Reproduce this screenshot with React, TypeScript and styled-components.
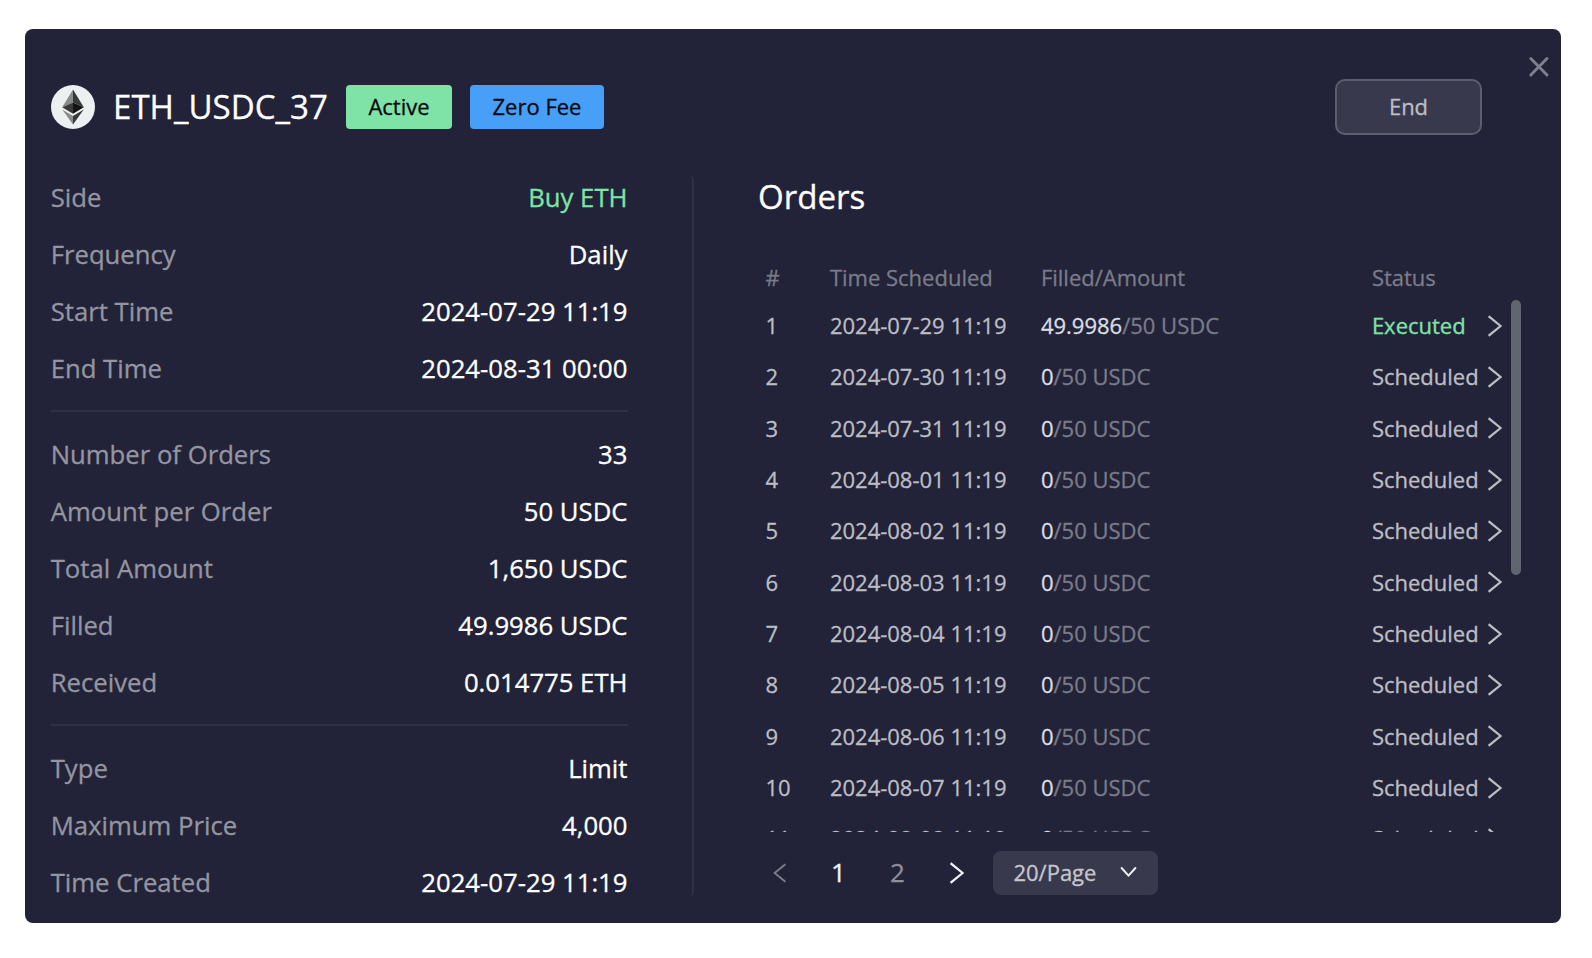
import React from "react";
import styled, { createGlobalStyle } from "styled-components";

const GlobalStyle = createGlobalStyle`
  *, *::before, *::after { box-sizing: border-box; }
  body {
    margin: 0;
    background: #fff;
    font-family: "Open Sans", "Noto Sans", sans-serif;
    -webkit-text-stroke: 0.3px currentColor;
  }
  button { font: inherit; cursor: pointer; }
`;

const Page = styled.div`
  width: 1592px;
  height: 958px;
  padding: 29px 31px 35px 25px;
  overflow: hidden;
`;

const Panel = styled.section`
  position: relative;
  width: 1536px;
  height: 894px;
  padding: 50px 40px 0 26px;
  border-radius: 8px;
  background: #222338;
  color: #fff;
`;

const CloseButton = styled.button`
  position: absolute;
  top: 26px;
  right: 10px;
  display: flex;
  padding: 0;
  border: 0;
  background: none;
  color: #7f808e;
`;

const Header = styled.header`
  display: flex;
  align-items: center;
  height: 56px;
  padding-right: 39px;
`;

const Title = styled.h1`
  width: 214px;
  margin: 0 19px 0 18px;
  font-size: 33.1px;
  line-height: 46px;
  font-weight: 400;
`;

const Badge = styled.span<{ $tone: string; $width: number }>`
  display: flex;
  align-items: center;
  justify-content: center;
  width: ${(p) => p.$width}px;
  height: 44px;
  margin-right: 18px;
  padding-bottom: 2px;
  border-radius: 4px;
  background: ${(p) => p.$tone};
  color: #06090d;
  font-size: 22px;
`;

const EndButton = styled.button`
  width: 147px;
  height: 56px;
  margin-left: auto;
  padding-bottom: 3px;
  border: 2px solid #5d5e70;
  border-radius: 10px;
  background: #39394e;
  color: #bdbdc4;
  font-size: 22px;
`;

const Body = styled.div`
  display: flex;
  padding-top: 33px;
`;

const Details = styled.div`
  width: 577px;
`;

const DetailGroup = styled.dl`
  margin: 0;

  & + & {
    margin-top: 14px;
    padding-top: 13px;
    border-top: 2px solid #2e3044;
  }
`;

const DetailRow = styled.div`
  display: flex;
  align-items: center;
  justify-content: space-between;
  height: 57px;
  padding: 2px 0.5px 0 0;
  font-size: 25.7px;
`;

const Label = styled.dt`
  margin-left: -0.3px;
  color: #9495a1;
`;

const Value = styled.dd<{ $accent?: boolean }>`
  margin: 0;
  color: ${(p) => (p.$accent ? "#7fe3a8" : "#fff")};
`;

const Separator = styled.div`
  width: 12px;
  height: 722px;
  margin: 7px 0 0 54px;
  border-right: 2px solid #2e3044;
  border-radius: 10px;
`;

const Orders = styled.div`
  display: flex;
  flex-direction: column;
  width: 763px;
  margin-left: 64px;
`;

const OrdersTitle = styled.h2`
  margin: 6px 0 0;
  font-size: 33.1px;
  line-height: 46px;
  font-weight: 400;
`;

const Row = styled.div`
  display: grid;
  grid-template-columns: 64.5px 211px 331px 116.5px 14px;
  align-items: center;
  height: 51.35px;
  padding: 0 0 1.6px 7.4px;
  color: #bdbdc4;
  font-size: 22px;

  svg {
    margin-top: 1.6px;
  }
`;

const HeadRow = styled(Row)`
  height: 46px;
  margin-top: 34px;
  padding-bottom: 0;
  color: #7a7b89;
`;

const ListArea = styled.div`
  display: flex;
  height: 532px;
  overflow: hidden;
`;

const List = styled.div`
  flex: none;
  width: 745px;
`;

const Scrollbar = styled.div`
  width: 10px;
  height: 275px;
  margin-left: 8px;
  border-radius: 5px;
  background: #5f6571;
`;

const Filled = styled.span`
  color: #dcdde3;
`;

const Muted = styled.span`
  color: #7a7b89;
`;

const Status = styled.span<{ $done: boolean }>`
  color: ${(p) => (p.$done ? "#7fe3a8" : "inherit")};
`;

const Pagination = styled.nav`
  display: flex;
  align-items: center;
  height: 45px;
  margin-top: 18px;
`;

const PageLink = styled.span<{ $current?: boolean; $gap: number }>`
  margin-left: ${(p) => p.$gap}px;
  padding-bottom: 1px;
  color: ${(p) => (p.$current ? "#eef2fb" : "#8d8e9a")};
  font-size: 26px;
`;

const ArrowSlot = styled.span<{ $gap: number; $current?: boolean }>`
  display: flex;
  margin-left: ${(p) => p.$gap}px;
  color: ${(p) => (p.$current ? "#eef2fb" : "#7d7e8c")};
`;

const PageSize = styled.button`
  display: flex;
  align-items: center;
  justify-content: space-between;
  width: 165px;
  height: 44px;
  margin-left: 29px;
  padding: 0 21px 1px 20.7px;
  border: 0;
  border-radius: 8px;
  background: #39394e;
  color: #c6c7cd;
  font-size: 22px;
`;

const details: [string, string][][] = [
  [
    ["Side", "Buy ETH"],
    ["Frequency", "Daily"],
    ["Start Time", "2024-07-29 11:19"],
    ["End Time", "2024-08-31 00:00"],
  ],
  [
    ["Number of Orders", "33"],
    ["Amount per Order", "50 USDC"],
    ["Total Amount", "1,650 USDC"],
    ["Filled", "49.9986 USDC"],
    ["Received", "0.014775 ETH"],
  ],
  [
    ["Type", "Limit"],
    ["Maximum Price", "4,000"],
    ["Time Created", "2024-07-29 11:19"],
  ],
];

const dates = ["07-29", "07-30", "07-31", "08-01", "08-02", "08-03", "08-04", "08-05", "08-06", "08-07", "08-08"];

const orders = dates.map((date, i) => ({
  id: i + 1,
  time: `2024-${date} 11:19`,
  filled: i === 0 ? "49.9986" : "0",
  status: i === 0 ? "Executed" : "Scheduled",
}));

const EthIcon = () => (
  <svg width="44" height="44" viewBox="0 0 44 44">
    <circle cx="22" cy="22" r="22" fill="#ecf0f0" />
    <path d="M22 4.5 11.2 22.3 22 17.5z" fill="#8a8a8a" />
    <path d="M22 4.5v13l10.8 4.8z" fill="#393939" />
    <path d="M11.2 22.3 22 28.7V17.5z" fill="#393939" />
    <path d="M22 17.5v11.2l10.8-6.4z" fill="#141414" />
    <path d="M11.2 24.5 22 39.5v-8.6z" fill="#8a8a8a" />
    <path d="M22 30.9v8.6l10.8-15z" fill="#393939" />
  </svg>
);

const CloseIcon = () => (
  <svg width="24" height="24" viewBox="0 0 24 24" fill="none" stroke="currentColor" strokeWidth="2.9" strokeLinecap="round">
    <path d="M3.8 3.5 20 20M20 3.5 3.8 20" />
  </svg>
);

const RightArrow = () => (
  <svg width="14" height="22" viewBox="0 0 14 22" fill="none" stroke="currentColor" strokeWidth="2.2">
    <path d="M.6 1.2 12.6 11 .6 20.8" />
  </svg>
);

const LeftArrow = () => (
  <svg width="13" height="20" viewBox="0 0 13 20" fill="none" stroke="currentColor" strokeWidth="1.8">
    <path d="M12.4 1.2 1.6 10l10.8 8.8" />
  </svg>
);

const DownArrow = () => (
  <svg width="17" height="12" viewBox="0 0 17 12" fill="none" stroke="#eef0f6" strokeWidth="2" strokeLinecap="round">
    <path d="M1.6 2 8.5 9.6 15.4 2" />
  </svg>
);

export default function App() {
  return (
    <Page>
      <GlobalStyle />
      <Panel>
        <CloseButton aria-label="Close">
          <CloseIcon />
        </CloseButton>
        <Header>
          <EthIcon />
          <Title>ETH_USDC_37</Title>
          <Badge $tone="#7fe3a8" $width={106}>Active</Badge>
          <Badge $tone="#479ff8" $width={134}>Zero Fee</Badge>
          <EndButton>End</EndButton>
        </Header>
        <Body>
          <Details>
            {details.map((group, i) => (
              <DetailGroup key={i}>
                {group.map(([label, value]) => (
                  <DetailRow key={label}>
                    <Label>{label}</Label>
                    <Value $accent={label === "Side"}>{value}</Value>
                  </DetailRow>
                ))}
              </DetailGroup>
            ))}
          </Details>
          <Separator />
          <Orders>
            <OrdersTitle>Orders</OrdersTitle>
            <HeadRow>
              <span>#</span>
              <span>Time Scheduled</span>
              <span>Filled/Amount</span>
              <span>Status</span>
            </HeadRow>
            <ListArea>
              <List>
                {orders.map((order) => (
                  <Row key={order.id}>
                    <span>{order.id}</span>
                    <span>{order.time}</span>
                    <span>
                      <Filled>{order.filled}</Filled>
                      <Muted>/50 USDC</Muted>
                    </span>
                    <Status $done={order.status === "Executed"}>{order.status}</Status>
                    <RightArrow />
                  </Row>
                ))}
              </List>
              <Scrollbar />
            </ListArea>
            <Pagination>
              <ArrowSlot $gap={15}>
                <LeftArrow />
              </ArrowSlot>
              <PageLink $current $gap={45}>1</PageLink>
              <PageLink $gap={44}>2</PageLink>
              <ArrowSlot $gap={45} $current>
                <RightArrow />
              </ArrowSlot>
              <PageSize>
                20/Page
                <DownArrow />
              </PageSize>
            </Pagination>
          </Orders>
        </Body>
      </Panel>
    </Page>
  );
}
